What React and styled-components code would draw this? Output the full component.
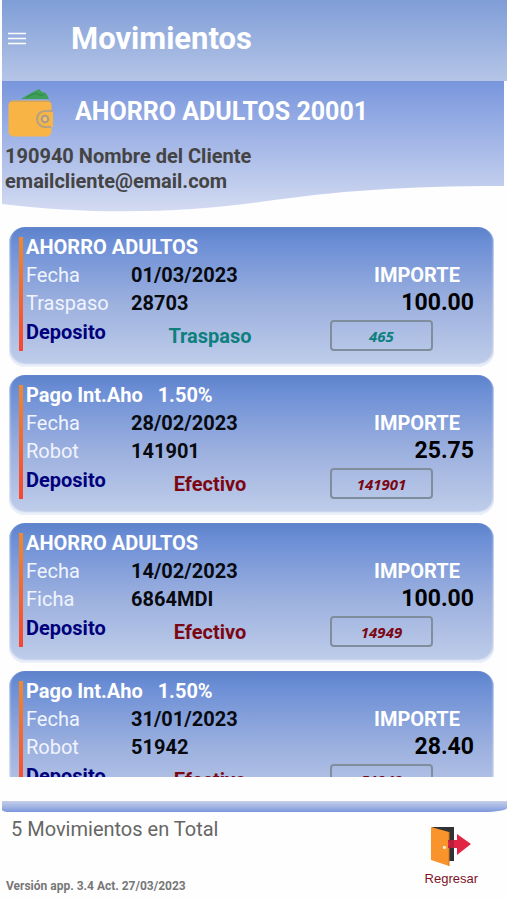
import React from 'react';
import styled, { createGlobalStyle } from 'styled-components';

const GlobalStyle = createGlobalStyle`
  * {
    box-sizing: border-box;
  }
  body {
    margin: 0;
    background: #fefefe;
    font-family: Roboto, 'Liberation Sans', sans-serif;
  }
  button {
    font-family: inherit;
    cursor: pointer;
  }
`;

const Page = styled.div`
  display: flex;
  flex-direction: column;
  height: 100vh;
  padding-left: 2px;
`;

const Header = styled.header`
  display: flex;
  align-items: center;
  gap: 45px;
  flex-shrink: 0;
  height: 81px;
  padding: 0 6px 4px;
  background: linear-gradient(#7f9ed7, #b5c5e7);
`;

const MenuButton = styled.button`
  display: flex;
  padding: 4px 0;
  border: 0;
  background: none;
`;

const Title = styled.h1`
  margin: 0;
  color: #fff;
  font-size: 31px;
  font-weight: 700;
  line-height: 40px;
`;

const AccountPanel = styled.section`
  position: relative;
  flex-shrink: 0;
  height: 131px;
  margin-right: 3px;
  padding: 3px 3px 0;
`;

const Wave = styled.svg`
  position: absolute;
  inset: 0;
  width: 100%;
  height: 100%;
  z-index: -1;
`;

const AccountRow = styled.div`
  display: flex;
  align-items: center;
  gap: 20px;
  height: 56px;
  margin-bottom: 4px;
`;

const AccountName = styled.h2`
  margin: 0;
  color: #fff;
  font-size: 25px;
  font-weight: 700;
  line-height: 32px;
`;

const ClientLine = styled.p`
  margin: 0;
  color: #444;
  font-size: 20px;
  font-weight: 700;
  line-height: 25px;
`;

const MovementList = styled.ul`
  display: flex;
  flex-direction: column;
  flex: 1;
  gap: 8px;
  min-height: 0;
  margin: 15px 13px 0 7px;
  padding: 0;
  overflow: hidden;
  list-style: none;
`;

const Card = styled.li`
  flex-shrink: 0;
  height: 140px;
  padding: 10px 20px 0 10px;
  border-radius: 16px;
  background: linear-gradient(#5c82cb, #6d8fd6 12%, #9db1df 55%, #c0ceea);
  box-shadow: inset 0 -2px 2px 1px rgba(255, 255, 255, 0.7);
`;

const CardBody = styled.div`
  position: relative;
  display: grid;
  grid-template-columns: 105px 1fr 185px;
  grid-template-rows: 20px 20px 19px 31px;
  row-gap: 8px;
  padding-left: 7px;
  font-size: 20px;
  line-height: 20px;

  &::before {
    content: '';
    position: absolute;
    left: 0;
    width: 4px;
    height: 100%;
    background: linear-gradient(#f08a2c, #f9452f);
  }
`;

const Concept = styled.h3`
  grid-column: 1 / -1;
  margin: 0;
  color: #fff;
  font-size: 20px;
  font-weight: 700;
  white-space: pre;
`;

const Label = styled.span`
  color: #f0f4fd;
`;

const Value = styled.span`
  color: #080a10;
  font-weight: 700;
`;

const AmountLabel = styled.span`
  justify-self: end;
  margin-right: 14px;
  color: #fff;
  font-weight: 700;
`;

const Amount = styled.span`
  justify-self: end;
  color: #000;
  font-size: 23px;
  font-weight: 700;
`;

const Kind = styled.span`
  color: #00007c;
  font-weight: 700;
  line-height: 24px;
`;

const Method = styled.span`
  align-self: center;
  width: 158px;
  color: ${props => props.$color};
  font-weight: 700;
  text-align: center;
`;

const FolioButton = styled.button`
  justify-self: end;
  width: 103px;
  margin-right: 41px;
  padding: 0;
  border: 2px solid #808d9c;
  border-radius: 4px;
  background: none;
  color: ${props => props.$color};

  && {
    font: italic 700 15px 'Open Sans', sans-serif;
  }
`;

const Footer = styled.footer`
  flex-shrink: 0;
  margin-top: 24px;
`;

const FooterStrip = styled.div`
  height: 11px;
  border-radius: 0 0 24px 8px / 0 0 4px 2px;
  background: linear-gradient(#c5cfe8, #a3b5e2 50%, #7b98dd);
`;

const FooterContent = styled.div`
  display: flex;
  justify-content: space-between;
  height: 88px;
  padding: 4px 29px 4px 4px;
`;

const FooterText = styled.div`
  display: flex;
  flex-direction: column;
  justify-content: space-between;
`;

const Total = styled.p`
  margin: 0;
  padding-left: 5px;
  color: #666;
  font-size: 20px;
  line-height: 26px;
`;

const Version = styled.p`
  margin: 0;
  color: #777;
  font-size: 12px;
  font-weight: 700;
  line-height: 20px;
`;

const BackButton = styled.button`
  display: flex;
  flex-direction: column;
  align-items: center;
  gap: 4px;
  padding: 10px 0 0;
  border: 0;
  background: none;
  color: #7d1426;
  line-height: 16px;

  && {
    font-family: 'Liberation Sans', sans-serif;
    font-size: 13px;
  }
`;

const MenuIcon = () => (
  <svg width="18" height="13" viewBox="0 0 18 13" aria-hidden="true">
    <path d="M0 1.5H18M0 6.5H18M0 11.5H18" stroke="#fff" strokeWidth="1.7" />
  </svg>
);

const WalletIcon = () => (
  <svg width="50" height="50" viewBox="0 0 50 50" aria-hidden="true">
    <path d="M16 12L26 6L34 2L37 5L41 6L44 12Z" fill="#3e9f58" />
    <path d="M22 10L31 6L34 8L39 8" fill="none" stroke="#2e8a4c" strokeWidth="1" />
    <rect x="3.5" y="13.5" width="43" height="36" rx="5" fill="#f8b546" />
    <path d="M5 14.5H45" stroke="#d5a551" strokeWidth="1" />
    <path d="M48 24H40A8 8 0 0 0 40 40H48Z" fill="#f8b546" />
    <path d="M48 24H40A8 8 0 0 0 40 40H46" fill="none" stroke="#b5a184" strokeWidth="2.2" />
    <circle cx="40" cy="32" r="3.2" fill="#f6c26a" stroke="#a69b89" strokeWidth="2" />
  </svg>
);

const DoorIcon = () => (
  <svg width="42" height="41" viewBox="0 0 42 41" aria-hidden="true">
    <path d="M2 1H24V35H15Z" fill="#303236" />
    <path d="M1 1L19 6V40L1 34Z" fill="#f8942b" />
    <path d="M19 6V40" stroke="#d6771e" strokeWidth="1" />
    <path d="M18 14H27V8L41 18L27 29V22H18Z" fill="#e32545" />
    <path d="M18 14L20 18L18 22H24V14Z" fill="#b51f3c" />
    <circle cx="14.5" cy="21.5" r="1.7" fill="#ffe9d0" />
  </svg>
);

const methodColors = {
  Traspaso: '#0d7f7d',
  Efectivo: '#7c0714',
};

const movements = [
  {
    concept: 'AHORRO ADULTOS',
    date: '01/03/2023',
    source: 'Traspaso',
    reference: '28703',
    amount: '100.00',
    method: 'Traspaso',
    folio: '465',
  },
  {
    concept: 'Pago Int.Aho   1.50%',
    date: '28/02/2023',
    source: 'Robot',
    reference: '141901',
    amount: '25.75',
    method: 'Efectivo',
    folio: '141901',
  },
  {
    concept: 'AHORRO ADULTOS',
    date: '14/02/2023',
    source: 'Ficha',
    reference: '6864MDI',
    amount: '100.00',
    method: 'Efectivo',
    folio: '14949',
  },
  {
    concept: 'Pago Int.Aho   1.50%',
    date: '31/01/2023',
    source: 'Robot',
    reference: '51942',
    amount: '28.40',
    method: 'Efectivo',
    folio: '51942',
  },
];

const Movement = ({ item }) => {
  const color = methodColors[item.method];

  return (
    <Card>
      <CardBody>
        <Concept>{item.concept}</Concept>
        <Label>Fecha</Label>
        <Value>{item.date}</Value>
        <AmountLabel>IMPORTE</AmountLabel>
        <Label>{item.source}</Label>
        <Value>{item.reference}</Value>
        <Amount>{item.amount}</Amount>
        <Kind>Deposito</Kind>
        <Method $color={color}>{item.method}</Method>
        <FolioButton type="button" $color={color}>
          {item.folio}
        </FolioButton>
      </CardBody>
    </Card>
  );
};

const App = () => {
  return (
    <>
      <GlobalStyle />
      <Page>
        <Header>
          <MenuButton type="button" aria-label="Menú">
            <MenuIcon />
          </MenuButton>
          <Title>Movimientos</Title>
        </Header>
        <AccountPanel>
          <Wave viewBox="0 0 502 131" preserveAspectRatio="none" aria-hidden="true">
            <defs>
              <linearGradient id="wave" x1="0" y1="0" x2="0" y2="1">
                <stop offset="0" stopColor="#7996dd" />
                <stop offset="1" stopColor="#d3dbf1" />
              </linearGradient>
            </defs>
            <path
              d="M0 0H502V105C400 105 335 110 258 121C180 132 90 134 0 123Z"
              fill="url(#wave)"
            />
          </Wave>
          <AccountRow>
            <WalletIcon />
            <AccountName>AHORRO ADULTOS 20001</AccountName>
          </AccountRow>
          <ClientLine>190940 Nombre del Cliente</ClientLine>
          <ClientLine>emailcliente@email.com</ClientLine>
        </AccountPanel>
        <MovementList>
          {movements.map((item, key) => (
            <Movement item={item} key={key} />
          ))}
        </MovementList>
        <Footer>
          <FooterStrip />
          <FooterContent>
            <FooterText>
              <Total>5 Movimientos en Total</Total>
              <Version>Versión app. 3.4 Act. 27/03/2023</Version>
            </FooterText>
            <BackButton type="button">
              <DoorIcon />
              Regresar
            </BackButton>
          </FooterContent>
        </Footer>
      </Page>
    </>
  );
};

export default App;
